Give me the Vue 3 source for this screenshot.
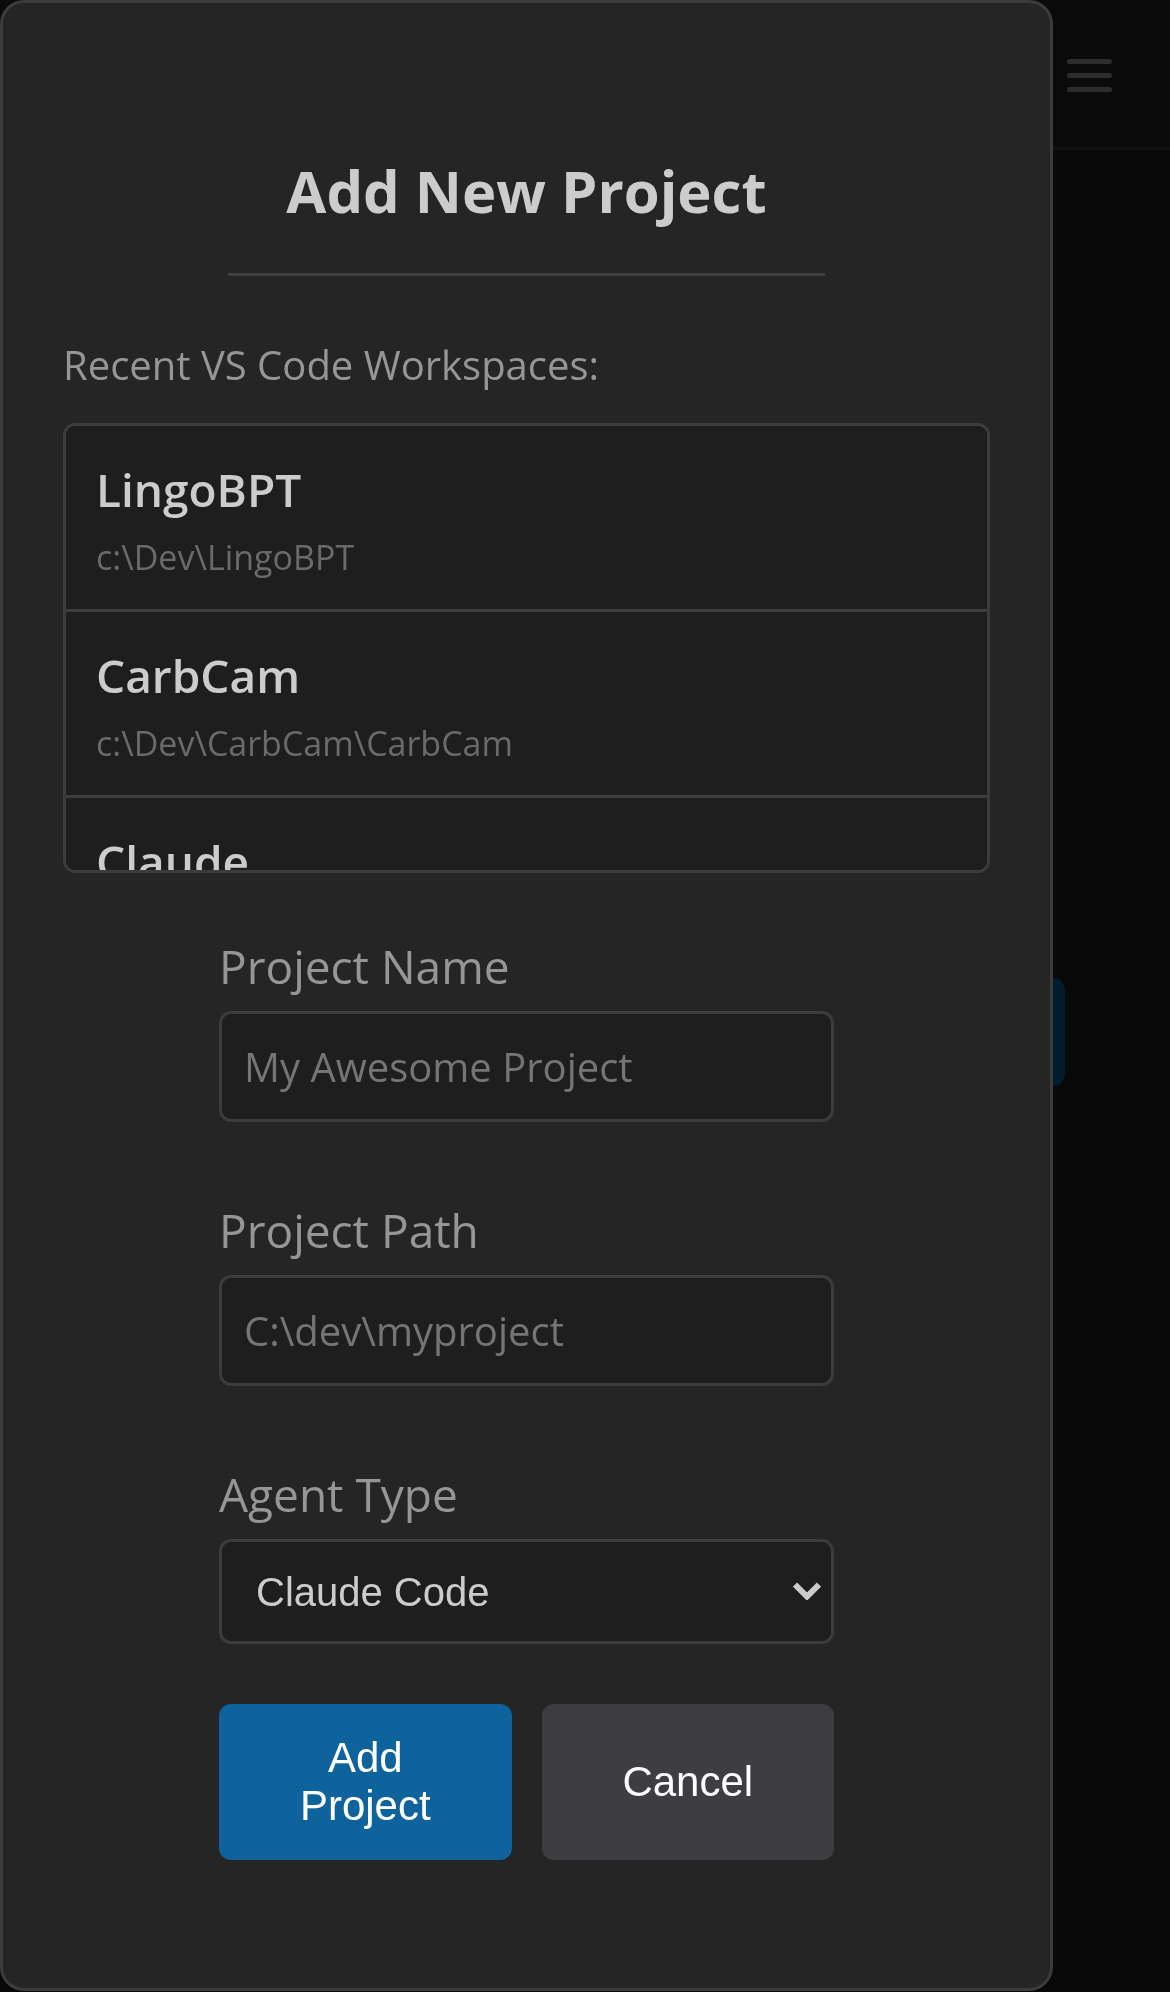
<template>
  <div class="app">
    <div class="page">
      <header class="page-header">
        <button class="menu-btn" type="button" aria-label="Menu">
          <span></span>
          <span></span>
          <span></span>
        </button>
      </header>
      <main class="page-main">
        <button class="page-action" type="button"></button>
      </main>
    </div>

    <div class="overlay">
      <div class="modal" role="dialog" aria-labelledby="modal-title">
        <h2 id="modal-title">Add New Project</h2>

        <p class="recent-label">Recent VS Code Workspaces:</p>
        <ul class="workspace-list">
          <li
            v-for="workspace in workspaces"
            :key="workspace.name"
            class="workspace-item"
            @click="selectWorkspace(workspace)"
          >
            <div class="workspace-name">{{ workspace.name }}</div>
            <div v-if="workspace.path" class="workspace-path">{{ workspace.path }}</div>
          </li>
        </ul>

        <form class="project-form" @submit.prevent>
          <div class="form-group">
            <label for="project-name">Project Name</label>
            <input id="project-name" v-model="name" type="text" placeholder="My Awesome Project" />
          </div>
          <div class="form-group">
            <label for="project-path">Project Path</label>
            <input id="project-path" v-model="path" type="text" placeholder="C:\dev\myproject" />
          </div>
          <div class="form-group">
            <label for="agent-type">Agent Type</label>
            <div class="select-wrap">
              <select id="agent-type" v-model="agent">
                <option value="claude">Claude Code</option>
              </select>
              <svg class="chevron" viewBox="0 0 28 18" aria-hidden="true">
                <path d="M2 2.5 L14 14.5 L26 2.5" />
              </svg>
            </div>
          </div>
          <div class="actions">
            <button class="btn btn-primary" type="submit">Add Project</button>
            <button class="btn btn-secondary" type="button">Cancel</button>
          </div>
        </form>
      </div>
    </div>
  </div>
</template>

<script setup>
import { ref } from 'vue'

const workspaces = [
  { name: 'LingoBPT', path: 'c:\\Dev\\LingoBPT' },
  { name: 'CarbCam', path: 'c:\\Dev\\CarbCam\\CarbCam' },
  { name: 'Claude' },
]

const name = ref('')
const path = ref('')
const agent = ref('claude')

function selectWorkspace(workspace) {
  name.value = workspace.name
  path.value = workspace.path || ''
}
</script>

<style>
body {
  margin: 0;
  background: #090909;
}
</style>

<style scoped>
.app {
  position: relative;
  min-height: 100vh;
  font-family: "Segoe UI", "Open Sans", "Noto Sans", sans-serif;
  color: #cccccc;
}

.app * {
  box-sizing: border-box;
}

.page {
  position: absolute;
  inset: 0;
  background: #1e1e1e;
}

.page-header {
  display: flex;
  align-items: center;
  justify-content: flex-end;
  height: 150px;
  padding: 3px 58px 0;
  background: #252526;
  border-bottom: 3px solid #3c3c3c;
}

.menu-btn {
  display: flex;
  flex-direction: column;
  gap: 9px;
  padding: 0;
  border: none;
  background: none;
}

.menu-btn span {
  width: 45px;
  height: 5px;
  border-radius: 3px;
  background: #969696;
}

.page-main {
  display: flex;
  justify-content: flex-end;
  padding: 828px 105px 0;
}

.page-action {
  width: 300px;
  height: 108px;
  border: none;
  border-radius: 12px;
  background: #0e639c;
}

.overlay {
  position: relative;
  min-height: 100vh;
  background: rgba(0, 0, 0, 0.7);
}

.modal {
  width: 90%;
  padding: 148px 60px 128px;
  background: #252526;
  border: 3px solid #3c3c3c;
  border-radius: 24px;
}

h2 {
  margin: 0 165px 61px;
  padding-bottom: 42px;
  border-bottom: 3px solid #3e3e42;
  font-size: 58px;
  line-height: 80px;
  font-weight: 700;
  text-align: center;
  white-space: nowrap;
}

.recent-label {
  margin: 0 0 30px;
  font-size: 40px;
  line-height: 56px;
  color: #969696;
}

.workspace-list {
  height: 450px;
  margin: 0 0 60px;
  padding: 0;
  list-style: none;
  background: #1e1e1e;
  border: 3px solid #3c3c3c;
  border-radius: 12px;
  overflow-y: auto;
  scrollbar-width: none;
}

.workspace-item {
  padding: 30px 30px 28px;
  border-bottom: 3px solid #3c3c3c;
  cursor: pointer;
}

.workspace-name {
  margin-bottom: 11px;
  font-size: 46px;
  line-height: 66px;
  font-weight: 600;
}

.workspace-path {
  font-size: 34px;
  line-height: 48px;
  color: #6a6a6a;
}

.project-form {
  padding: 0 156px;
}

.form-group {
  margin-bottom: 75px;
}

.form-group:nth-child(3) {
  margin-bottom: 60px;
}

label {
  display: block;
  margin-bottom: 12px;
  font-size: 46px;
  line-height: 66px;
  color: #969696;
}

input,
select {
  display: block;
  width: 100%;
  background: #1e1e1e;
  border: 3px solid #3c3c3c;
  border-radius: 12px;
  color: #cccccc;
}

input {
  height: 111px;
  padding: 0 22px;
  font-family: inherit;
  font-size: 40px;
}

input::placeholder {
  color: #757575;
}

select {
  height: 105px;
  padding: 0 34px;
  appearance: none;
  font-family: Arial, "Liberation Sans", sans-serif;
  font-size: 40px;
}

.select-wrap {
  position: relative;
}

.chevron {
  position: absolute;
  top: 43px;
  right: 13px;
  width: 28px;
  height: 18px;
  fill: none;
  stroke: #cccccc;
  stroke-width: 6;
  pointer-events: none;
}

.actions {
  display: flex;
  gap: 30px;
}

.btn {
  flex: 1;
  padding: 30px 60px;
  border: none;
  border-radius: 12px;
  font-family: Arial, "Liberation Sans", sans-serif;
  font-size: 42px;
  line-height: 48px;
  color: #ffffff;
  cursor: pointer;
}

.btn-primary {
  background: #0e639c;
}

.btn-secondary {
  background: #3e3d42;
}
</style>
